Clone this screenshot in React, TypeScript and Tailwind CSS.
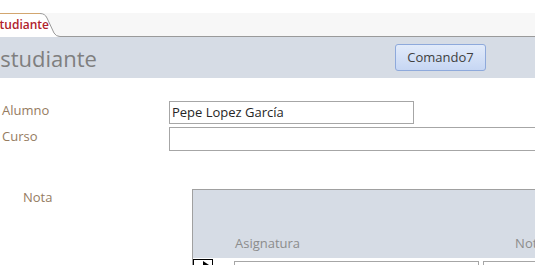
const font = { fontFamily: '"Open Sans", "Noto Sans", sans-serif' };

export default function App() {
  return (
    <div className="w-[535px] h-[265px] overflow-hidden bg-white relative" style={font}>
      {/* pestaña del formulario */}
      <div className="h-[13px] bg-white" />
      <div className="h-[24px] flex bg-[#f7f7f7] border-b border-[#9a9a9a]">
        <div className="relative h-[24px] w-[60px] overflow-hidden">
          <svg width="60" height="24" viewBox="0 0 60 24" className="absolute inset-0">
            <path d="M0 0.5 L40 0.5 Q45 0.5 47 5 L54 20 Q56 23.5 60 23.5 L60 24 L0 24 Z" fill="#fff" />
            <path d="M0 0.5 L40 0.5" stroke="#d2a66f" strokeWidth="1" fill="none" />
            <path d="M40 0.5 Q45 0.5 47 5 L54 20 Q56 23.5 60 23.5" stroke="#9a9a9a" strokeWidth="1" fill="none" />
          </svg>
          <span className="relative block -ml-[13px] pt-[3px] text-[12px] font-semibold text-[#b0212b] leading-[17px]">
            Estudiante
          </span>
        </div>
      </div>

      {/* cabecera */}
      <div className="h-[41px] bg-[#d6dce5] flex items-center">
        <span className="-ml-[12px] text-[22px] text-[#7f7f7f] leading-none">Estudiante</span>
        <button className="ml-auto mr-[49px] w-[91px] h-[27px] rounded-[3px] border border-[#8ea9db] bg-gradient-to-b from-[#e2ebfa] to-[#c6d6f3] text-[13px] text-[#404040]">
          Comando7
        </button>
      </div>

      {/* detalle */}
      <div className="pt-[23px] flex flex-col gap-[4px]">
        <div className="flex items-center h-[23px]">
          <span className="w-[169px] shrink-0 pl-[2px] -mt-[4px] text-[13px] text-[#957b5f]">Alumno</span>
          <div className="w-[245px] shrink-0 h-[23px] border border-[#a6a6a6] px-[2px] text-[13px] text-[#262626] leading-[20px]">
            Pepe Lopez García
          </div>
        </div>
        <div className="flex items-center h-[24px] -mt-[1px]">
          <span className="w-[169px] shrink-0 pl-[2px] -mt-[4px] text-[13px] text-[#957b5f]">Curso</span>
          <div className="w-[380px] h-[24px] border border-[#a6a6a6] shrink-0" />
        </div>
      </div>

      {/* subformulario de notas */}
      <div className="mt-[38px] flex">
        <span className="w-[192px] shrink-0 pl-[23px] -mt-[1px] text-[13px] text-[#957b5f]">Nota</span>
        <div className="w-[360px] shrink-0 border-t border-l border-[#a0a0a0]">
          <div className="h-[68px] bg-[#d6dce5] flex items-end pb-[5px] text-[13px] text-[#8c8c8c]">
            <span className="ml-[42px]">Asignatura</span>
            <span className="ml-[215px]">Nota</span>
          </div>
          <div className="flex h-[12px] bg-white">
            <div className="w-[20px] shrink-0 h-[10px] border border-black mt-[1px] relative">
              <svg width="8" height="8" viewBox="0 0 8 8" className="absolute left-[9px] top-[1px]">
                <path d="M0 0 L0 7 L2 5 L4 8 L5 7 L3 4 L6 4 Z" fill="#000" />
              </svg>
            </div>
            <div className="ml-[21px] shrink-0 w-[245px] h-[12px] mt-[3px] border-t border-l border-r border-[#a6a6a6]" />
            <div className="ml-[4px] shrink-0 w-[60px] h-[12px] mt-[3px] border-t border-l border-[#a6a6a6]" />
          </div>
        </div>
      </div>
    </div>
  );
}
